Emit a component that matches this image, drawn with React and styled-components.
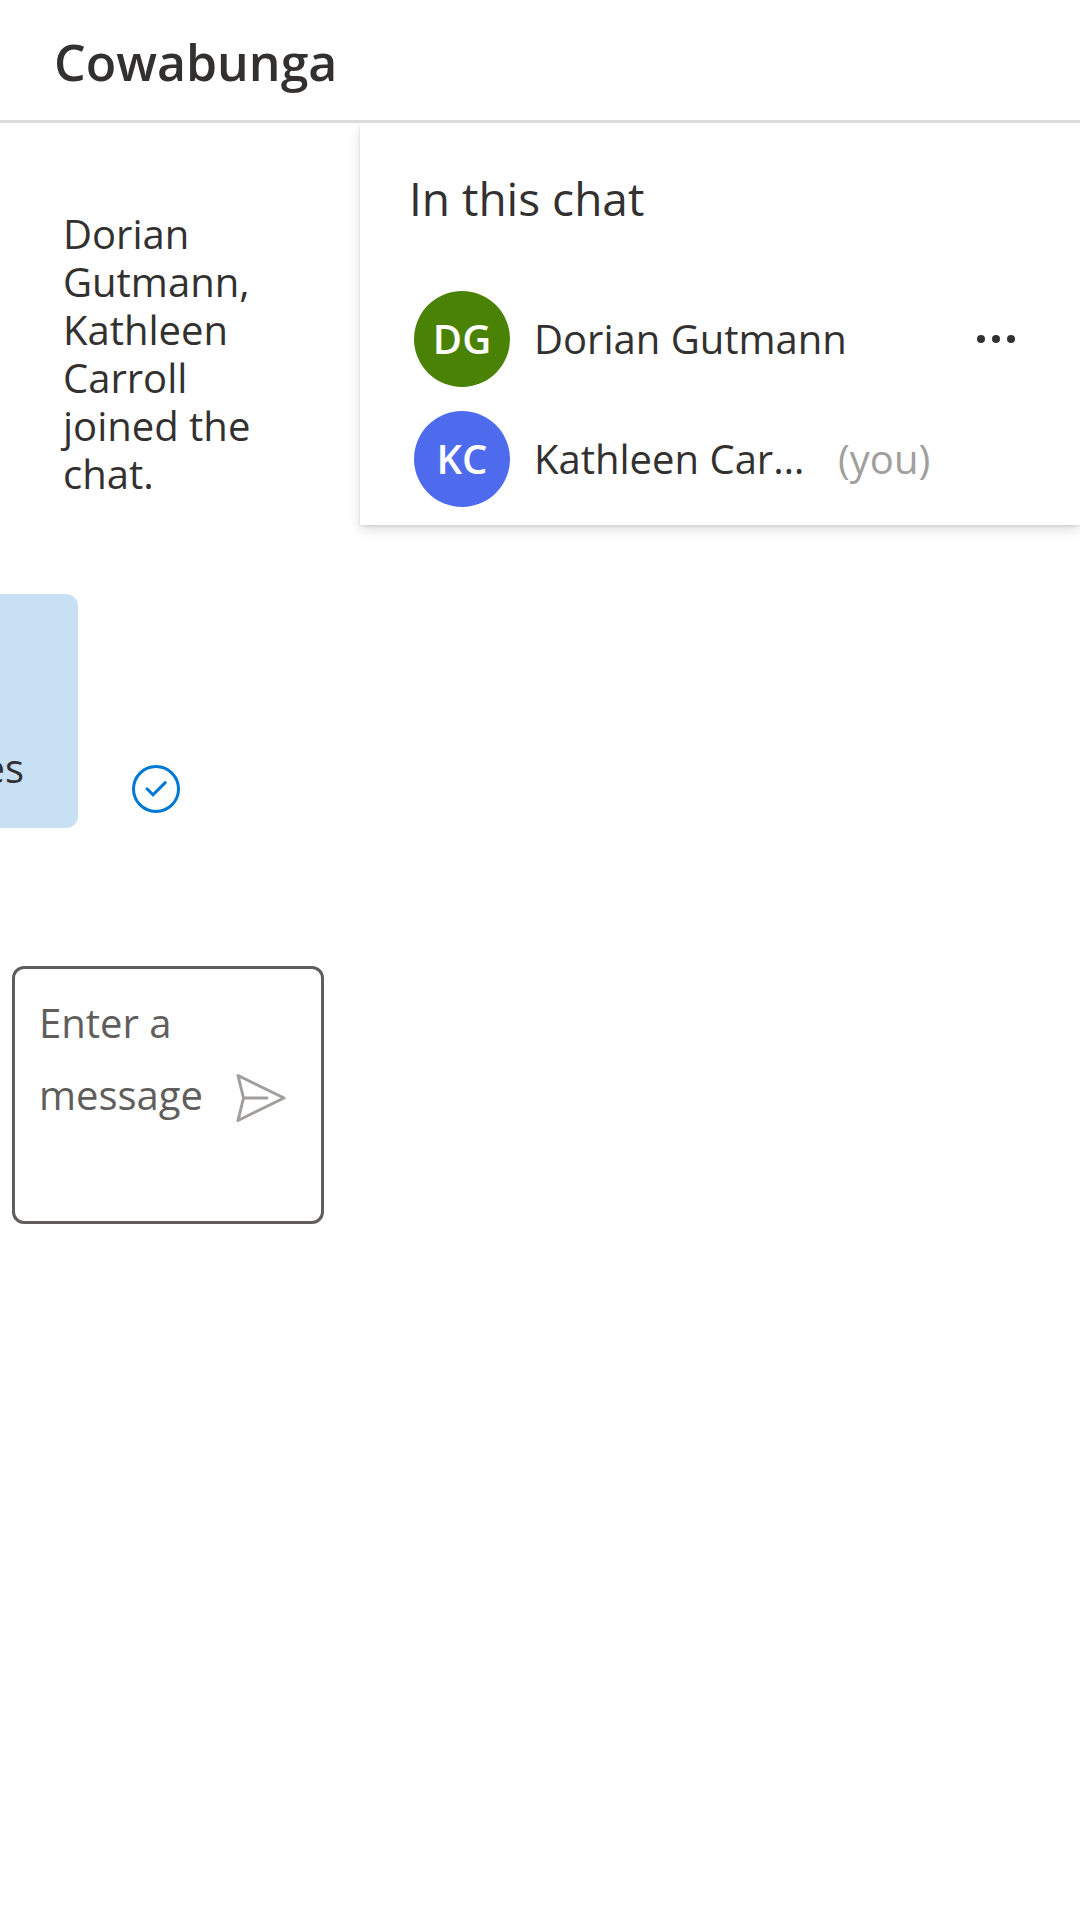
import React from "react";
import styled, { createGlobalStyle } from "styled-components";

const GlobalStyle = createGlobalStyle`
  *, *::before, *::after { box-sizing: border-box; }
  body {
    margin: 0;
    background: #fff;
    color: #323130;
    font-family: "Segoe UI", "Open Sans", "Noto Sans", sans-serif;
    font-size: 40px;
    line-height: 48px;
  }
  h1, h2, p, ul { margin: 0; padding: 0; }
`;

const Header = styled.header`
  padding: 26px 54px 22px;
  border-bottom: 3px solid #dcdcdc;
`;

const Title = styled.h1`
  font-size: 50px;
  font-weight: 600;
  line-height: 72px;
`;

const Body = styled.div`
  display: grid;
  grid-template-columns: 1fr 2fr;
  align-items: start;
  overflow: hidden;
`;

const Thread = styled.main`
  min-width: 0;
`;

const SystemNote = styled.p`
  padding: 87px 96px 96px 63px;
`;

const MessageRow = styled.div`
  display: flex;
  align-items: flex-end;
  gap: 54px;
`;

const Bubble = styled.p`
  display: flex;
  align-items: flex-end;
  justify-content: flex-end;
  width: 78px;
  min-height: 234px;
  padding: 36px 54px 36px 0;
  border-radius: 0 12px 12px 0;
  background: #c7e0f4;
`;

const Status = styled.span`
  display: flex;
  padding-bottom: 15px;
  color: #0078d4;
`;

const Composer = styled.form`
  display: flex;
  align-items: center;
  margin: 138px 36px 0 12px;
  padding: 18px 30px 18px 24px;
  border: 3px solid #605e5c;
  border-radius: 12px;
`;

const MessageBox = styled.textarea`
  flex: 1;
  min-width: 0;
  height: 216px;
  padding: 0;
  border: 0;
  outline: 0;
  resize: none;
  overflow: hidden;
  background: transparent;
  color: inherit;
  font: inherit;
  line-height: 72px;
  &::placeholder { color: #605e5c; opacity: 1; }
`;

const IconButton = styled.button`
  display: flex;
  align-items: center;
  justify-content: center;
  flex: none;
  width: 60px;
  height: 60px;
  padding: 0;
  border: 0;
  background: transparent;
  color: ${(p) => p.$color};
  cursor: pointer;
`;

const SendButton = styled(IconButton)`
  height: 66px;
  padding-top: 6px;
`;

const Panel = styled.aside`
  min-width: 0;
  padding: 42px 54px 18px 49px;
  background: #fff;
  box-shadow: 0 5px 11px rgba(0, 0, 0, 0.13), 0 1px 3px rgba(0, 0, 0, 0.11);
`;

const PanelTitle = styled.h2`
  font-size: 46px;
  font-weight: 400;
  line-height: 66px;
`;

const People = styled.ul`
  display: flex;
  flex-direction: column;
  gap: 24px;
  padding: 60px 0 0 5px;
  list-style: none;
`;

const Person = styled.li`
  display: flex;
  align-items: center;
  height: 96px;
`;

const Avatar = styled.span`
  display: flex;
  align-items: center;
  justify-content: center;
  flex: none;
  width: 96px;
  height: 96px;
  margin-right: 24px;
  border-radius: 50%;
  background: ${(p) => p.$color};
  color: #fff;
  font-weight: 600;
`;

const Name = styled.span`
  flex: 0 1 auto;
  max-width: ${(p) => (p.$short ? "276px" : "none")};
  overflow: hidden;
  text-overflow: ellipsis;
  white-space: nowrap;
  line-height: 60px;
`;

const You = styled.span`
  margin-left: 28px;
  color: #a19f9d;
`;

const MoreSlot = styled.span`
  margin-left: auto;
`;

const people = [
  { name: "Dorian Gutmann", initials: "DG", color: "#498205" },
  { name: "Kathleen Carroll", initials: "KC", color: "#4f6bed", you: true },
];

export default function App() {
  return (
    <>
      <GlobalStyle />
      <Header>
        <Title>Cowabunga</Title>
      </Header>
      <Body>
        <Thread>
          <SystemNote>Dorian Gutmann, Kathleen Carroll joined the chat.</SystemNote>
          <MessageRow>
            <Bubble>es</Bubble>
            <Status role="img" aria-label="Sent">
              <svg width="48" height="48" viewBox="0 0 48 48" fill="none" stroke="currentColor" strokeWidth="3">
                <circle cx="24" cy="24" r="22.5" />
                <path d="M15 23.8l6 6L33.2 17.6" strokeLinecap="round" />
              </svg>
            </Status>
          </MessageRow>
          <Composer onSubmit={(e) => e.preventDefault()}>
            <MessageBox aria-label="Enter a message" placeholder="Enter a message" />
            <SendButton type="submit" aria-label="Send message" $color="#a19f9d">
              <svg width="50" height="50" viewBox="0 0 50 50" fill="none" stroke="currentColor" strokeWidth="3" strokeLinejoin="round" strokeLinecap="round">
                <path d="M2 2.5L48 25 2 47.500 7.500 25z" />
                <path d="M7.500 25H31" />
              </svg>
            </SendButton>
          </Composer>
        </Thread>
        <Panel>
          <PanelTitle>In this chat</PanelTitle>
          <People>
            {people.map((p) => (
              <Person key={p.initials}>
                <Avatar $color={p.color}>{p.initials}</Avatar>
                <Name $short={p.you}>{p.name}</Name>
                {p.you ? (
                  <You>(you)</You>
                ) : (
                  <MoreSlot>
                    <IconButton type="button" aria-label="More options" $color="#323130">
                      <svg width="48" height="48" viewBox="0 0 48 48" fill="currentColor">
                        <circle cx="9" cy="24" r="4" />
                        <circle cx="24" cy="24" r="4" />
                        <circle cx="39" cy="24" r="4" />
                      </svg>
                    </IconButton>
                  </MoreSlot>
                )}
              </Person>
            ))}
          </People>
        </Panel>
      </Body>
    </>
  );
}
